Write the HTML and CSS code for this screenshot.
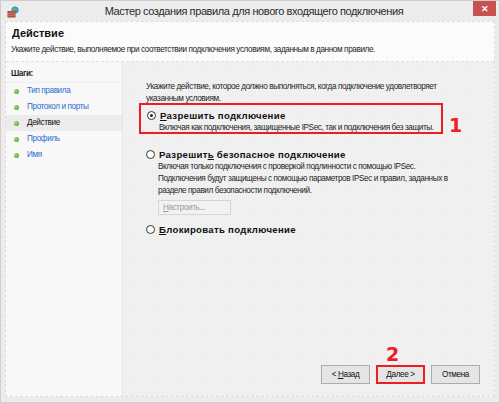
FILE: index.html
```html
<!DOCTYPE html>
<html lang="ru">
  <head>
    <meta charset="UTF-8" />
    <meta name="viewport" content="width=device-width, initial-scale=1.0" />
    <title>Мастер создания правила</title>
    <link rel="stylesheet" href="styles.css">
  </head>
  <body>
    <div class="window">
      <div class="titlebar">
        <svg class="app-icon" width="12" height="12" viewBox="0 0 12 12">
          <circle cx="8" cy="4" r="3.6" fill="#3a8fd8" />
          <path d="M5.5 2.5 Q8 1 10.5 3 Q9 5 7 5 Z" fill="#5cb84a" />
          <rect x="0.5" y="5" width="8" height="6.5" fill="#a8453a" />
          <path d="M0.5 7.2 H8.5 M0.5 9.4 H8.5 M3 5 V7.2 M6 5 V7.2 M1.8 7.2 V9.4 M4.6 7.2 V9.4 M7.2 7.2 V9.4 M3 9.4 V11.5 M6 9.4 V11.5" stroke="#d98a7a" stroke-width="0.6" />
        </svg>
        <div class="title">Мастер создания правила для нового входящего подключения</div>
        <button type="button" class="close-btn">✕</button>
      </div>

      <div class="frame">
        <div class="header">
          <h1>Действие</h1>
          <p>Укажите действие, выполняемое при соответствии подключения условиям, заданным в данном правиле.</p>
        </div>

        <div class="body">
          <div class="steps">
            <div class="steps-title">Шаги:</div>
            <ul>
              <li class="link">Тип правила</li>
              <li class="link">Протокол и порты</li>
              <li class="current">Действие</li>
              <li class="link">Профиль</li>
              <li class="link">Имя</li>
            </ul>
          </div>

          <div class="content">
            <div class="main">
              <p class="intro">Укажите действие, которое должно выполняться, когда подключение удовлетворяет указанным условиям.</p>

              <div class="option-row">
                <div class="option marked">
                  <label class="radio-line">
                    <span class="radio checked"></span>
                    <span class="option-title"><u>Р</u>азрешить подключение</span>
                  </label>
                  <p class="desc">Включая как подключения, защищенные IPSec, так и подключения без защиты.</p>
                </div>
                <span class="mark">1</span>
              </div>

              <div class="option">
                <label class="radio-line">
                  <span class="radio"></span>
                  <span class="option-title">Разрешит<u>ь</u> безопасное подключение</span>
                </label>
                <p class="desc">Включая только подключения с проверкой подлинности с помощью IPSec. Подключения будут защищены с помощью параметров IPSec и правил, заданных в разделе правил безопасности подключений.</p>
                <button type="button" class="setup-btn" disabled><u>Н</u>астроить...</button>
              </div>

              <div class="option">
                <label class="radio-line">
                  <span class="radio"></span>
                  <span class="option-title"><u>Б</u>локировать подключение</span>
                </label>
              </div>
            </div>

            <div class="footer">
              <button type="button" class="btn">&lt; <u>Н</u>азад</button>
              <span class="next-wrap">
                <span class="mark mark-2">2</span>
                <button type="button" class="btn marked-btn"><u>Д</u>алее &gt;</button>
              </span>
              <button type="button" class="btn">Отмена</button>
            </div>
          </div>
        </div>
      </div>
    </div>
  </body>
</html>
```

FILE: styles.css
```css
* {
  box-sizing: border-box;
}
body {
  margin: 0;
  font-family: "Liberation Sans", Arial, sans-serif;
  font-size: 8.2px;
  letter-spacing: -0.4px;
  color: #1e1e1e;
}
u {
  text-decoration: underline;
}
.window {
  width: 500px;
  height: 403px;
  background: #ececec;
  border: 1px solid #cfcfcf;
  padding: 0 4px 5px 4px;
  display: flex;
  flex-direction: column;
}
.titlebar {
  height: 20px;
  display: flex;
  align-items: center;
}
.app-icon {
  margin-left: 2px;
  margin-top: 1px;
}
.title {
  flex: 1;
  text-align: center;
  font-size: 11px;
  letter-spacing: -0.4px;
  color: #2b2b2b;
  padding-left: 16px;
}
.close-btn {
  width: 23px;
  height: 15px;
  margin-top: -5px;
  margin-right: -1px;
  background: #c75050;
  color: white;
  border: none;
  font-size: 9px;
  font-weight: bold;
  padding: 0;
}
.frame {
  flex: 1;
  border: 1px dashed #dcdcdc;
  display: flex;
  flex-direction: column;
  background: #fafafa;
}
.header {
  height: 40px;
  background: #fbfbfb;
  border-bottom: 1px dashed #e0e0e0;
  padding: 5px 0 0 6px;
}
.header h1 {
  margin: 0;
  font-size: 11px;
  letter-spacing: 0;
  font-weight: bold;
  color: #111;
}
.header p {
  margin: 6px 0 0 -1px;
}
.body {
  flex: 1;
  display: flex;
}
.steps {
  width: 116px;
  background: #f8f8f8;
  padding-top: 7px;
}
.steps-title {
  font-weight: bold;
  line-height: 10px;
  padding-left: 5px;
  padding-bottom: 3px;
  border-bottom: 1px dotted #e4e4e4;
}
.steps ul {
  list-style: none;
  margin: 0;
  padding: 0;
}
.steps li {
  height: 16px;
  line-height: 16px;
  padding-left: 21px;
  position: relative;
}
.steps li::before {
  content: "";
  position: absolute;
  left: 8px;
  top: 6px;
  width: 5px;
  height: 5px;
  border-radius: 50%;
  background: radial-gradient(circle at 35% 35%, #9ee07a, #3c9a2a);
}
.steps li.link {
  color: #2d6fd0;
}
.steps li.current {
  color: #111;
  background: #ececec;
}
.content {
  flex: 1;
  background-color: #efefef;
  background-image: radial-gradient(#f7f7f7 0.6px, transparent 0.7px);
  background-size: 3px 3px;
  border-left: 1px solid #e6e6e6;
  display: flex;
  flex-direction: column;
  padding: 19px 10px 12px 16px;
}
.main {
  flex: 1;
}
.intro {
  margin: 0 0 0 7px;
  width: 310px;
  line-height: 12px;
}
.option-row {
  display: flex;
  align-items: flex-end;
  margin-top: -2px;
}
.option {
  padding: 0 0 0 7px;
}
.option.marked {
  width: 304px;
  height: 31px;
  border: 2px solid #ee1c24;
  padding: 5px 0 0 6px;
  flex: none;
}
.option-row + .option {
  margin-top: 15px;
}
.option + .option {
  margin-top: 9px;
}
.radio-line {
  display: flex;
  align-items: center;
  gap: 4px;
}
.radio {
  width: 9px;
  height: 9px;
  border: 1px solid #333;
  border-radius: 50%;
  background: white;
  display: flex;
  align-items: center;
  justify-content: center;
}
.radio.checked::after {
  content: "";
  width: 3px;
  height: 3px;
  border-radius: 50%;
  background: #222;
}
.option-title {
  font-weight: bold;
  font-size: 9.6px;
  letter-spacing: 0.3px;
  color: #111;
}
.desc {
  margin: 1px 0 0 12px;
  width: 300px;
  line-height: 12px;
}
.mark {
  color: #ee1c24;
  font-weight: bold;
  font-size: 19px;
  letter-spacing: 0;
  font-family: "DejaVu Sans", sans-serif;
  margin-left: 6px;
  line-height: 17px;
}
.setup-btn {
  display: block;
  margin: 3px 0 0 12px;
  width: 73px;
  height: 15px;
  font-family: inherit;
  font-size: 8.2px;
  letter-spacing: -0.4px;
  color: #9a9a9a;
  background: #f2f2f2;
  border: 1px solid #d6d6d6;
  text-align: left;
  padding: 0 0 0 4px;
}
.footer {
  display: flex;
  justify-content: flex-end;
  gap: 6px;
  padding-right: 4px;
}
.btn {
  width: 49px;
  height: 19px;
  font-family: inherit;
  font-size: 8.2px;
  letter-spacing: -0.4px;
  color: #111;
  background: #e5e5e5;
  border: 1px solid #acacac;
  padding: 0;
}
.next-wrap {
  position: relative;
}
.marked-btn {
  border: 2px solid #ee1c24;
}
.mark-2 {
  position: absolute;
  left: 10px;
  top: -19px;
  margin: 0;
}
```
